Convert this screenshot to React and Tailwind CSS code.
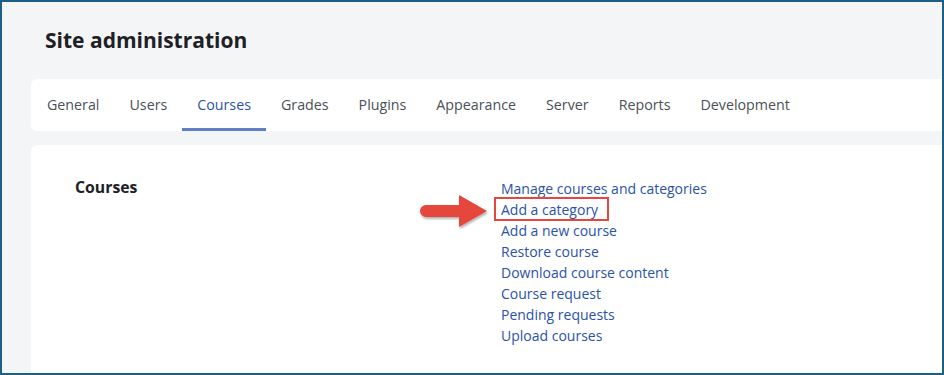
const tabs = ["General", "Users", "Courses", "Grades", "Plugins", "Appearance", "Server", "Reports", "Development"]

const links = [
    "Manage courses and categories",
    "Add a category",
    "Add a new course",
    "Restore course",
    "Download course content",
    "Course request",
    "Pending requests",
    "Upload courses",
]

function Arrow() {
    return (
        <svg className="absolute left-[-81px] top-[-7px]" width="72" height="36" viewBox="0 0 72 36">
            <defs>
                <filter id="sh" x="-20%" y="-30%" width="140%" height="160%">
                    <feDropShadow dx="1" dy="2" stdDeviation="1.2" floodColor="#000" floodOpacity="0.3" />
                </filter>
            </defs>
            <path d="M6 12 H39 V2 L67 18 L39 34 V24 H6 A6 6 0 0 1 6 12 Z" fill="#e5463d" filter="url(#sh)" />
        </svg>
    )
}

export default function App() {
    return (
        <div className="w-[944px] h-[375px] border-2 border-[#1c6088] bg-[#f4f5f7] overflow-hidden font-['Open_Sans',sans-serif] text-[#1d2125]">
            <h1 className="pl-[43px] pt-[24px] h-[77px] text-[21px] font-bold leading-[28px]">Site administration</h1>

            <div className="ml-[29px] h-[52px] bg-white rounded-l-md flex pl-px">
                {tabs.map((t) => (
                    <div
                        key={t}
                        className={
                            t === "Courses"
                                ? "px-[15px] flex items-center text-[14.25px] text-[#2a52a8] border-b-[3px] border-[#5e80c5] pt-[2px]"
                                : "px-[15px] flex items-center text-[14.25px] text-[#495057]"
                        }
                    >
                        {t}
                    </div>
                ))}
            </div>

            <div className="ml-[29px] mt-[14px] h-[300px] bg-white rounded-tl-md flex pt-[33px]">
                <h3 className="w-[470px] pl-[44px] text-[15.8px] font-bold leading-[18px]">Courses</h3>
                <ul className="flex flex-col">
                    {links.map((l) => (
                        <li key={l} className="h-[21px] leading-[21px] text-[14px] text-[#2a52a8]">
                            {l === "Add a category" ? (
                                <span className="relative">
                                    <Arrow />
                                    <span className="absolute left-[-7px] top-[-3px] w-[115px] h-[24px] border-2 border-[#e5463d]"></span>
                                    {l}
                                </span>
                            ) : (
                                l
                            )}
                        </li>
                    ))}
                </ul>
            </div>
        </div>
    )
}
